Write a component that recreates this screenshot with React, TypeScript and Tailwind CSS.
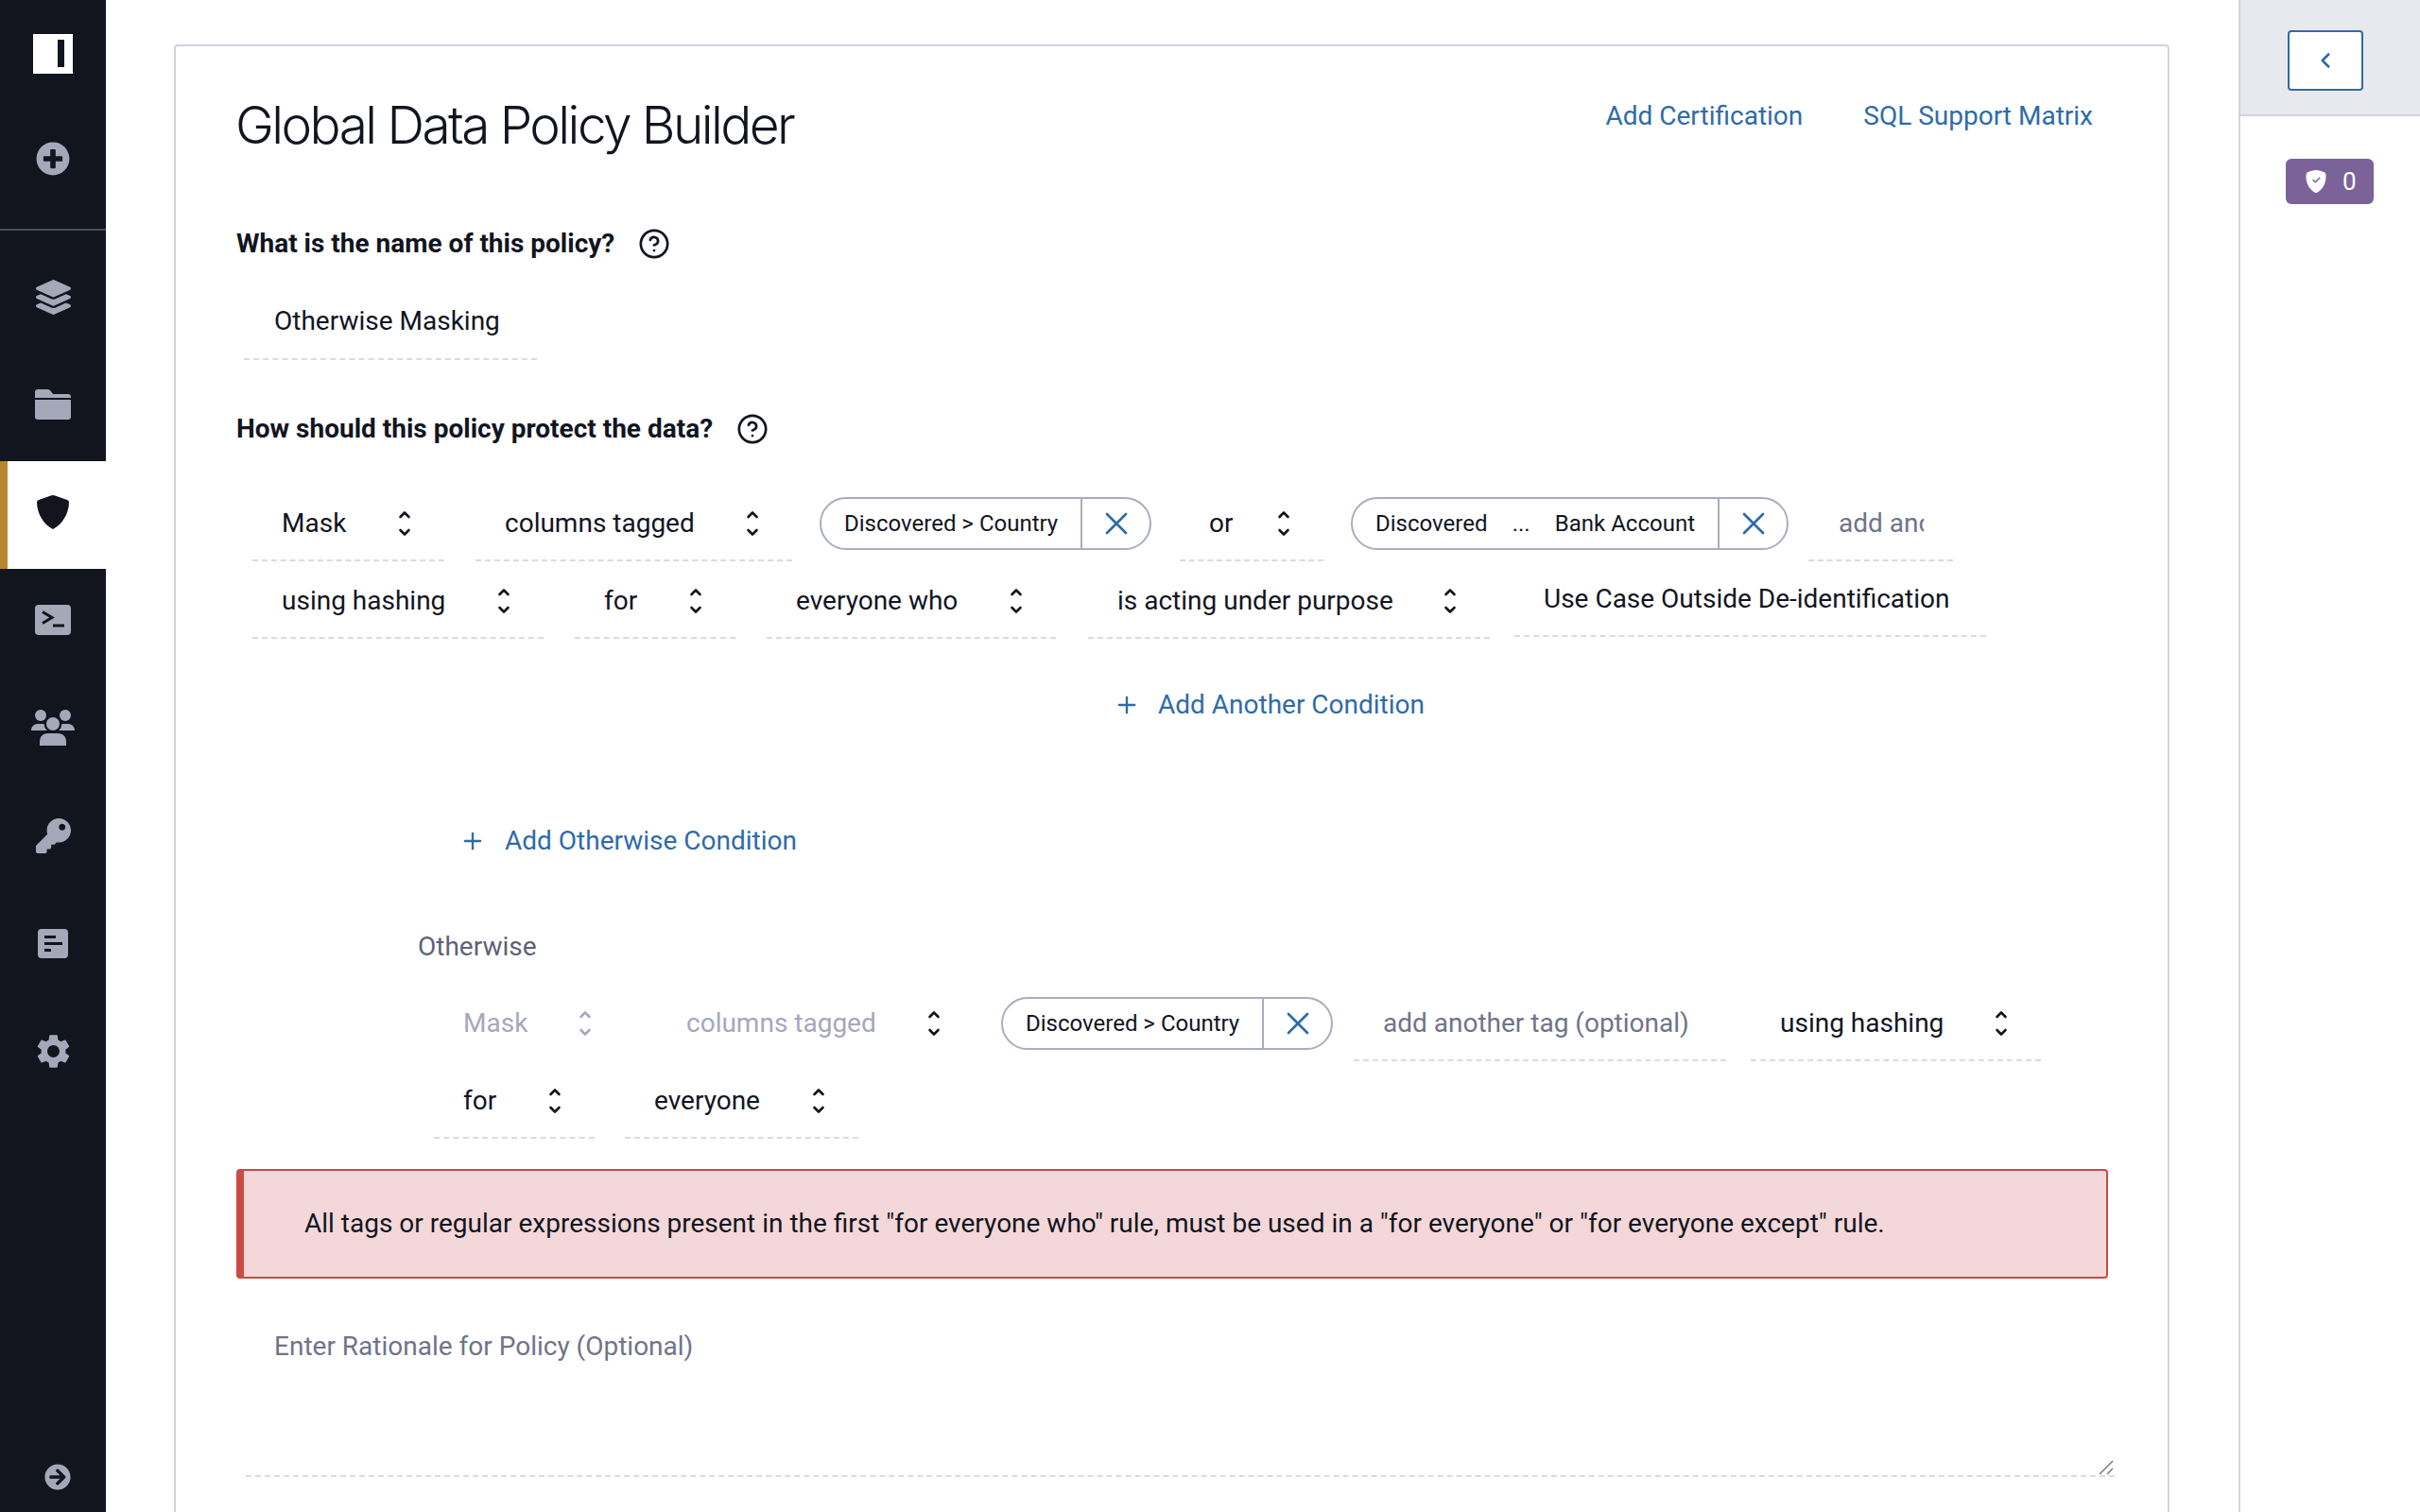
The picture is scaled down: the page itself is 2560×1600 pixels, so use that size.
import { CircleHelp, Plus, X, ChevronLeft } from 'lucide-react';
import { FaPlusCircle, FaLayerGroup, FaKey, FaArrowCircleRight } from 'react-icons/fa';
import { BsShieldFillCheck } from 'react-icons/bs';
import { MdSettings } from 'react-icons/md';

function FolderIcon() {
  return (
    <svg width="38" height="32" viewBox="0 0 38 32" fill="currentColor">
      <path d="M0 3a3 3 0 0 1 3-3h10c1.500 0 2.500 .6 3.400 1.600L19 5h16a3 3 0 0 1 3 3v1H0z" />
      <path d="M0 11h38v18a3 3 0 0 1-3 3H3a3 3 0 0 1-3-3z" />
    </svg>
  );
}

function ShieldIcon() {
  return (
    <svg width="34" height="36" viewBox="0 0 34 36" fill="currentColor">
      <path d="M17 0c1 0 2 .4 3 .8L32 5c1.200.4 2 1.400 2 2.600C34 20 26 32 17 36 8 32 0 20 0 7.600 0 6.400.8 5.400 2 5L14 .8c1-.4 2-.8 3-.8z" />
    </svg>
  );
}

function TerminalIcon() {
  return (
    <svg width="38" height="32" viewBox="0 0 38 32">
      <rect width="38" height="32" rx="4" fill="currentColor" />
      <path d="M8 7.500 18 13.500 8 19.500" fill="none" stroke="#12151e" strokeWidth="3" />
      <path d="M19 22h12" fill="none" stroke="#12151e" strokeWidth="3" />
    </svg>
  );
}

function UsersIcon() {
  return (
    <svg width="46" height="38" viewBox="0 0 46 38" fill="currentColor">
      <circle cx="10" cy="6" r="6" />
      <circle cx="36" cy="6" r="6" />
      <circle cx="23" cy="15" r="7" />
      <path d="M0 22c0-4 3-7 7-7h5c1 0 1.500.2 2 .5-.2 2.500.8 5 3 6.500H0z" />
      <path d="M46 22c0-4-3-7-7-7h-5c-1 0-1.500.2-2 .5.200 2.500-.8 5-3 6.500h17z" />
      <path d="M9 38v-4c0-6 4-9 9-9h10c5 0 9 3 9 9v4z" />
    </svg>
  );
}

function DocIcon() {
  return (
    <svg width="32" height="31" viewBox="0 0 32 31">
      <rect width="32" height="31" rx="4" fill="currentColor" />
      <rect x="7" y="7" width="12" height="3" fill="#12151e" />
      <rect x="7" y="14" width="19" height="3" fill="#12151e" />
      <rect x="7" y="21" width="7" height="3" fill="#12151e" />
    </svg>
  );
}

function LogoMark() {
  return (
    <div className="flex h-[42px] w-[42px] justify-end bg-white pt-[6px] pr-[9px]">
      <div className="h-[29px] w-[7px] bg-[#12151e]" />
    </div>
  );
}

function Updown({ muted }: { muted?: boolean }) {
  return (
    <svg width="14" height="28" viewBox="0 0 14 28" fill="none" stroke={muted ? '#a5a8b9' : '#12151f'} strokeWidth="2.600" strokeLinecap="round" strokeLinejoin="round" className="shrink-0">
      <path d="M2.500 7 7 2.500 11.500 7" />
      <path d="M2.500 21 7 25.500 11.500 21" />
    </svg>
  );
}

function NavRow({ children, active }: { children: React.ReactNode; active?: boolean }) {
  return (
    <div className={active
      ? 'flex h-[114px] items-center justify-center border-l-8 border-[#b8862f] bg-white pr-[8px] pb-[6px] text-[#12151e]'
      : 'flex h-[114px] items-center justify-center pb-[6px] text-[#a5a8b9]'}>
      {children}
    </div>
  );
}

function Select({ label, className, muted, arrowMuted, noDash }: { label: string; className: string; muted?: boolean; arrowMuted?: boolean; noDash?: boolean }) {
  return (
    <div className={`mb-[14px] flex h-[68px] items-center justify-between border-b-2 border-dashed pr-[35px] pb-[11px] pl-[31px] ${noDash ? 'border-transparent' : 'border-[#d9dae3]'} ${className}`}>
      <span className={muted ? 'text-[#a5a8b9]' : 'text-[#12151f]'}>{label}</span>
      <Updown muted={arrowMuted} />
    </div>
  );
}

function Chip({ children, className }: { children: React.ReactNode; className: string }) {
  return (
    <div className={`mb-[14px] flex h-[56px] items-stretch rounded-full border-2 border-[#a9adbf] text-[24px] whitespace-nowrap text-[#12151f] ${className}`}>
      <div className="flex flex-1 items-center justify-between pr-[24px] pl-[24px]">{children}</div>
      <div className="flex w-[73px] items-center justify-center border-l-2 border-[#a9adbf] text-[#2f6ba8]">
        <X size={40} strokeWidth={1.600} />
      </div>
    </div>
  );
}

export default function App() {
  return (
    <div className="flex h-screen overflow-hidden bg-white font-['Roboto',sans-serif] text-[28px] leading-[40px] text-[#12151f]">
      {/* Sidebar */}
      <aside className="flex w-[112px] shrink-0 flex-col bg-[#12151e]">
        <div className="flex h-[114px] items-center justify-center">
          <LogoMark />
        </div>
        <NavRow><FaPlusCircle size={36} /></NavRow>
        <div className="mt-[14px] mb-[16px] h-[2px] bg-[#4a4d5c]" />
        <NavRow><FaLayerGroup size={37} /></NavRow>
        <NavRow><FolderIcon /></NavRow>
        <NavRow active><ShieldIcon /></NavRow>
        <NavRow><TerminalIcon /></NavRow>
        <NavRow><UsersIcon /></NavRow>
        <NavRow><FaKey size={37} /></NavRow>
        <NavRow><DocIcon /></NavRow>
        <NavRow><MdSettings size={43} /></NavRow>
        <div className="mt-auto flex justify-center pb-[23px] pl-[10px] text-[#a5a8b9]">
          <FaArrowCircleRight size={28} />
        </div>
      </aside>

      {/* Main */}
      <main className="min-w-0 flex-1 pt-[47px] pl-[72px]">
        <div className="h-[1700px] w-[2111px] rounded-t-[4px] border-2 border-[#d1d3dd] pl-[64px]">
          <div className="flex h-[189px] items-start justify-between pt-[51px] pr-[79px]">
            <h1 className="-ml-[1px] font-['Inter',sans-serif] text-[55px] leading-[64px] font-light tracking-[-0.047em]">Global Data Policy Builder</h1>
            <div className="mt-[3px] flex gap-[64px] text-[#2f6ba8]">
              <span>Add Certification</span>
              <span>SQL Support Matrix</span>
            </div>
          </div>

          <div className="flex h-[40px] items-center gap-[25px] font-bold">
            What is the name of this policy?
            <CircleHelp size={34} strokeWidth={1.900} />
          </div>
          <input
            readOnly
            value="Otherwise Masking"
            className="mt-[22px] ml-[8px] block h-[81px] w-[310px] border-b-2 border-dashed border-[#d9dae3] pl-[32px] outline-none"
          />

          <div className="mt-[53px] flex h-[40px] items-center gap-[25px] font-bold">
            How should this policy protect the data?
            <CircleHelp size={34} strokeWidth={1.900} />
          </div>

          <div className="mt-[52px] ml-[17px] flex w-[1850px] flex-wrap items-start">
            <Select label="Mask" className="mr-[33px] w-[203px]" />
            <Select label="columns tagged" className="mr-[29px] w-[335px]" />
            <Chip className="mr-[30px] w-[351px]"><span>Discovered &gt; Country</span></Chip>
            <Select label="or" className="mr-[29px] w-[152px]" />
            <Chip className="mr-[21px] w-[463px]">
              <span>Discovered</span>
              <span>...</span>
              <span>Bank Account</span>
            </Chip>
            <div className="mb-[14px] h-[68px] w-[153px] border-b-2 border-dashed border-[#d9dae3] pb-[11px] pl-[32px]">
              <input readOnly placeholder="add another tag (optional)" className="h-full w-[90px] outline-none placeholder:text-[#6f7488]" />
            </div>
            <Select label="using hashing" className="mr-[33px] w-[308px]" />
            <Select label="for" className="mr-[33px] w-[170px]" />
            <Select label="everyone who" className="mr-[34px] w-[306px]" />
            <Select label="is acting under purpose" className="mr-[26px] w-[425px]" />
            <div className="mb-[16px] flex h-[66px] w-[499px] items-center border-b-2 border-dashed border-[#d9dae3] pb-[12px] pl-[31px] whitespace-nowrap">
              Use Case Outside De-identification
            </div>
          </div>

          <div className="mt-[36px] ml-[928px] flex h-[40px] items-center gap-[19px] text-[#2f6ba8]">
            <Plus size={28} strokeWidth={2} />
            Add Another Condition
          </div>
          <div className="mt-[104px] ml-[236px] flex h-[40px] items-center gap-[20px] text-[#2f6ba8]">
            <Plus size={28} strokeWidth={2} />
            Add Otherwise Condition
          </div>

          <div className="mt-[71px] ml-[192px] h-[40px] pt-[1px] text-[#5d6275]">Otherwise</div>

          <div className="mt-[34px] ml-[209px] flex w-[1760px] flex-wrap items-start">
            <Select label="Mask" className="mr-[34px] w-[202px]" muted arrowMuted noDash />
            <Select label="columns tagged" className="mr-[29px] w-[335px]" muted noDash />
            <Chip className="mr-[22px] w-[351px]"><span>Discovered &gt; Country</span></Chip>
            <div className="mr-[26px] mb-[14px] flex h-[68px] w-[394px] items-center border-b-2 border-dashed border-[#d9dae3] pb-[11px] pl-[31px] whitespace-nowrap text-[#6f7488]">
              add another tag (optional)
            </div>
            <Select label="using hashing" className="w-[307px]" />
            <Select label="for" className="mr-[32px] w-[170px]" />
            <Select label="everyone" className="w-[247px]" />
          </div>

          <div className="mt-[18px] flex h-[116px] w-[1980px] items-center rounded-[4px] border-2 border-l-8 border-[#c94a46] bg-[#f4d8d9] pl-[64px]">
            All tags or regular expressions present in the first "for everyone who" rule, must be used in a "for everyone" or "for everyone except" rule.
          </div>

          <div className="relative mt-[42px] ml-[10px] h-[168px] w-[1977px]">
            <textarea
              className="block h-full w-full resize-none border-b-2 border-dashed border-[#d9dae3] pt-[10px] pl-[30px] outline-none placeholder:text-[#6f7488]"
              placeholder="Enter Rationale for Policy (Optional)"
            />
            <svg width="16" height="16" viewBox="0 0 16 16" fill="none" stroke="#6b6b6b" strokeWidth="1.200" className="absolute right-[1px] bottom-[2px]">
              <path d="M1 15 15 1" />
              <path d="M9 15l6-6" />
            </svg>
          </div>
        </div>
      </main>

      {/* Right panel */}
      <aside className="w-[192px] shrink-0 border-l-2 border-[#d1d3dd]">
        <div className="flex h-[123px] border-b-2 border-[#d1d3dd] bg-[#e8e9ee] pt-[32px] pl-[50px]">
          <div className="flex h-[64px] w-[80px] items-center justify-center rounded-[4px] border-2 border-[#2f6ba8] bg-white text-[#2f6ba8]">
            <ChevronLeft size={26} strokeWidth={2.400} />
          </div>
        </div>
        <div className="mt-[45px] ml-[48px] flex h-[48px] w-[93px] items-center gap-[16px] rounded-[6px] bg-[#7b6399] pl-[20px] text-[26px] text-white">
          <BsShieldFillCheck size={24} />
          0
        </div>
      </aside>
    </div>
  );
}
